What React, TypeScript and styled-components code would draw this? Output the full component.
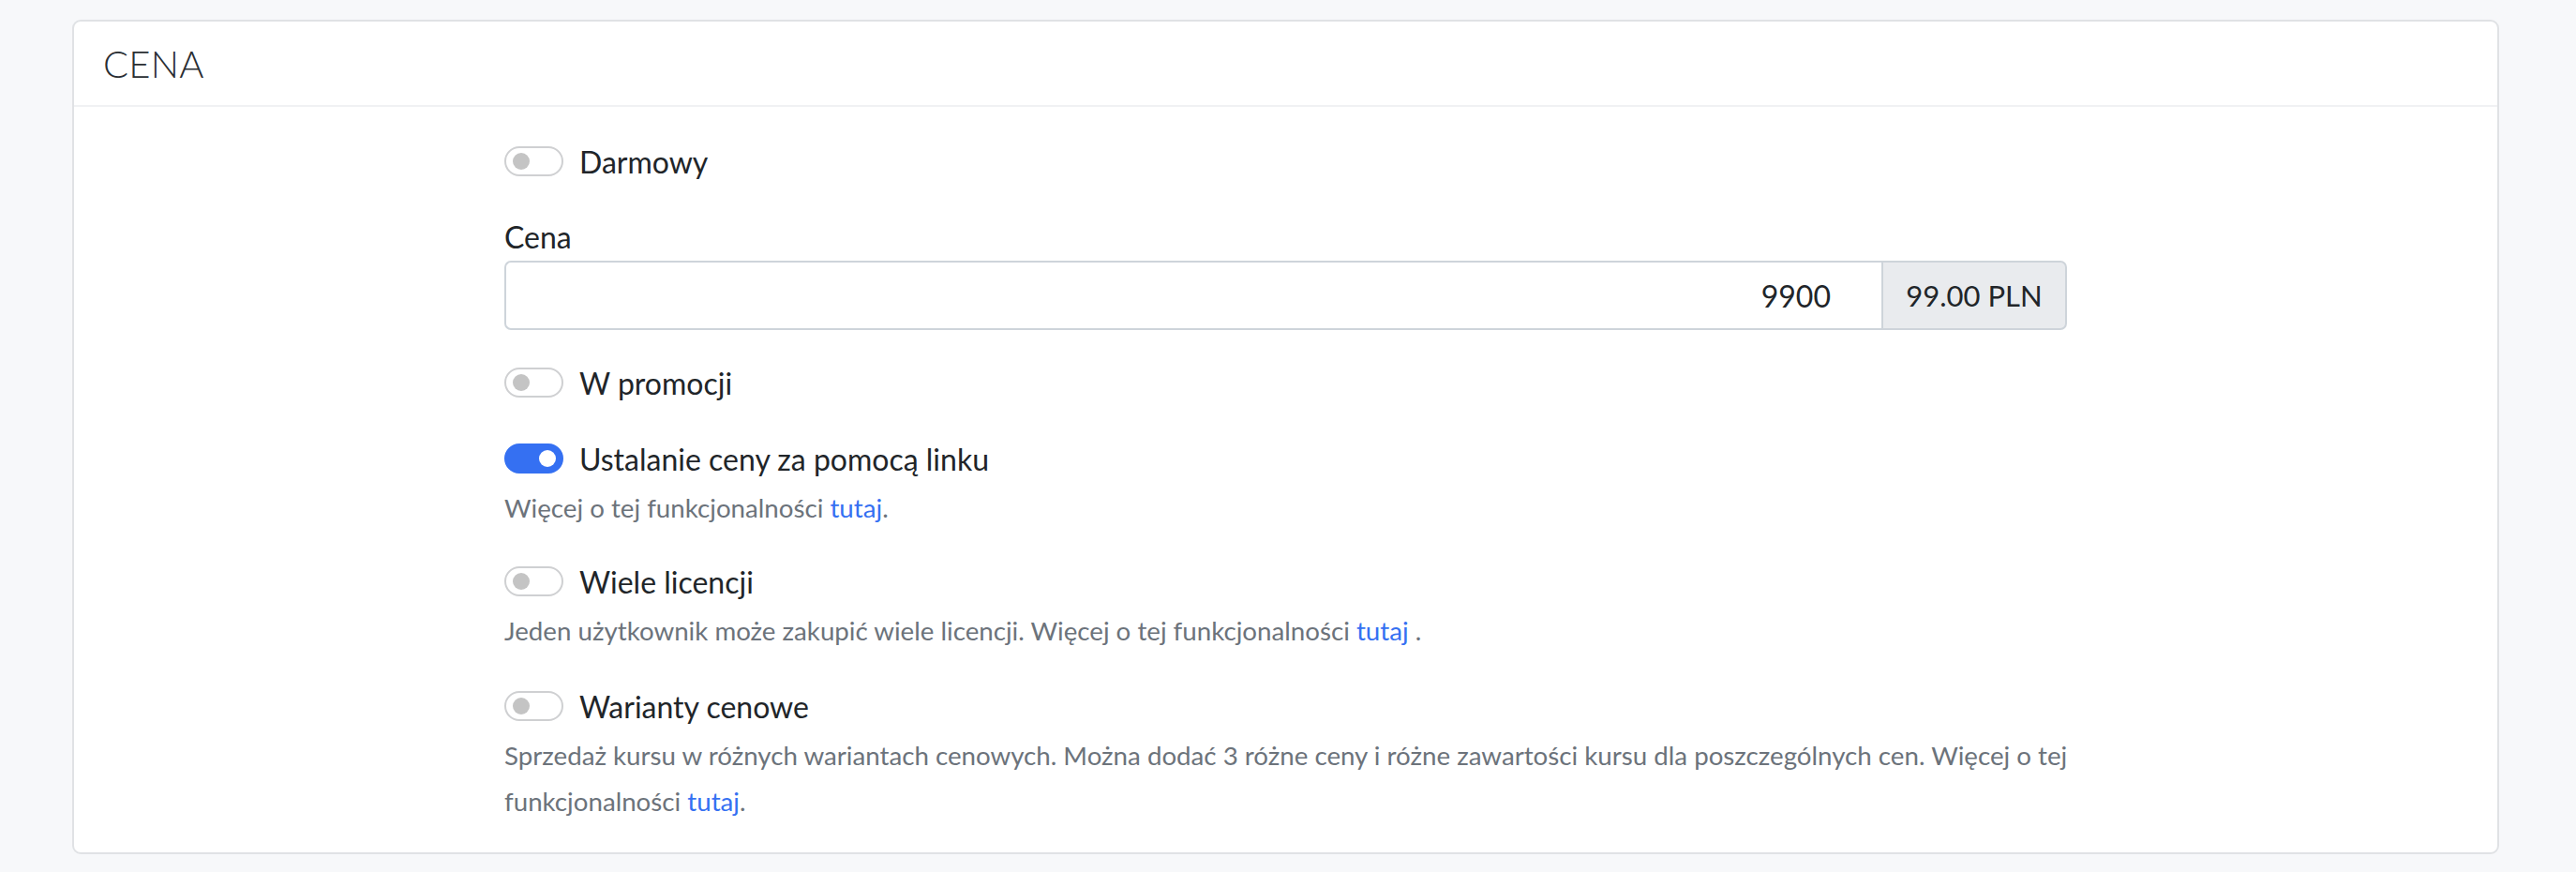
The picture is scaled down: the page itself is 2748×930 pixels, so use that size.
import React from "react";
import styled, { createGlobalStyle } from "styled-components";

const Global = createGlobalStyle`
  html, body { margin: 0; padding: 0; }
  body {
    background: #f7f8fa;
    font-family: Lato, "Noto Sans", "Liberation Sans", sans-serif;
    color: #212529;
  }
`;

const Page = styled.div`
  padding: 21px 82px 22px 77px;
`;

const Card = styled.section`
  background: #fff;
  border: 2px solid #e0e2e5;
  border-radius: 9px;
  box-sizing: border-box;
`;

const CardHeader = styled.header`
  height: 91px;
  box-sizing: border-box;
  border-bottom: 2px solid #f0f1f3;
  display: flex;
  align-items: center;
  padding: 0 31px;
  font-size: 40px;
  font-weight: 300;
  color: #2a2e33;
  letter-spacing: 0.3px;
`;

const CardBody = styled.div`
  padding: 38px 0 30px;
  display: grid;
  grid-template-columns: 459px 1740px 1fr;
`;

const Column = styled.div`
  grid-column: 2;
  display: flex;
  flex-direction: column;
`;

const Group = styled.div<{ $gap?: number }>`
  display: flex;
  flex-direction: column;
  margin-bottom: ${(p) => p.$gap ?? 37}px;
`;

const SwitchRow = styled.label`
  display: flex;
  align-items: center;
  gap: 17px;
  height: 40px;
  font-size: 32px;
  color: #212529;
`;

const Track = styled.span<{ $on?: boolean }>`
  position: relative;
  width: 63px;
  height: 32px;
  box-sizing: border-box;
  border-radius: 16px;
  border: 2px solid ${(p) => (p.$on ? "#3570f2" : "#cfd0d2")};
  background: ${(p) => (p.$on ? "#3570f2" : "#fff")};
  flex: none;
`;

const Knob = styled.span<{ $on?: boolean }>`
  position: absolute;
  top: 50%;
  transform: translateY(-50%);
  left: ${(p) => (p.$on ? "35px" : "7px")};
  width: 18px;
  height: 18px;
  border-radius: 50%;
  background: ${(p) => (p.$on ? "#fff" : "#c4c4c4")};
`;

const Help = styled.p`
  margin: 8px 0 0;
  font-size: 27.7px;
  line-height: 49px;
  color: #6c737b;
`;

const Link = styled.a`
  color: #3570f2;
  text-decoration: none;
`;

const FieldLabel = styled.div`
  font-size: 32px;
  line-height: 40px;
  margin-bottom: 5px;
  color: #212529;
`;

const InputGroup = styled.div`
  display: flex;
  width: 1667px;
  height: 74px;
`;

const Input = styled.input`
  flex: 1;
  min-width: 0;
  box-sizing: border-box;
  border: 2px solid #ced4da;
  border-right: none;
  border-radius: 7px 0 0 7px;
  padding: 0 54px 0 20px;
  text-align: right;
  font-family: inherit;
  font-size: 32px;
  color: #212529;
  outline: none;
`;

const Addon = styled.span`
  width: 198px;
  box-sizing: border-box;
  border: 2px solid #ced4da;
  border-radius: 0 7px 7px 0;
  background: #e9ebee;
  display: flex;
  align-items: center;
  justify-content: center;
  font-size: 31px;
  color: #212529;
`;

function Switch({ on, label }: { on?: boolean; label: string }) {
  return (
    <SwitchRow>
      <Track $on={on}>
        <Knob $on={on} />
      </Track>
      {label}
    </SwitchRow>
  );
}

export default function App() {
  return (
    <>
      <Global />
      <Page>
        <Card>
          <CardHeader>CENA</CardHeader>
          <CardBody>
            <Column>
              <Group $gap={41}>
                <Switch label="Darmowy" />
              </Group>
              <Group $gap={36}>
                <FieldLabel>Cena</FieldLabel>
                <InputGroup>
                  <Input defaultValue="9900" />
                  <Addon>99.00 PLN</Addon>
                </InputGroup>
              </Group>
              <Group $gap={41}>
                <Switch label="W promocji" />
              </Group>
              <Group $gap={34}>
                <Switch on label="Ustalanie ceny za pomocą linku" />
                <Help>
                  Więcej o tej funkcjonalności <Link href="#">tutaj</Link>.
                </Help>
              </Group>
              <Group $gap={36}>
                <Switch label="Wiele licencji" />
                <Help>
                  Jeden użytkownik może zakupić wiele licencji. Więcej o tej
                  funkcjonalności <Link href="#">tutaj</Link> .
                </Help>
              </Group>
              <Group $gap={0}>
                <Switch label="Warianty cenowe" />
                <Help>
                  Sprzedaż kursu w różnych wariantach cenowych. Można dodać 3
                  różne ceny i różne zawartości kursu dla poszczególnych cen.
                  Więcej o tej funkcjonalności <Link href="#">tutaj</Link>.
                </Help>
              </Group>
            </Column>
          </CardBody>
        </Card>
      </Page>
    </>
  );
}
